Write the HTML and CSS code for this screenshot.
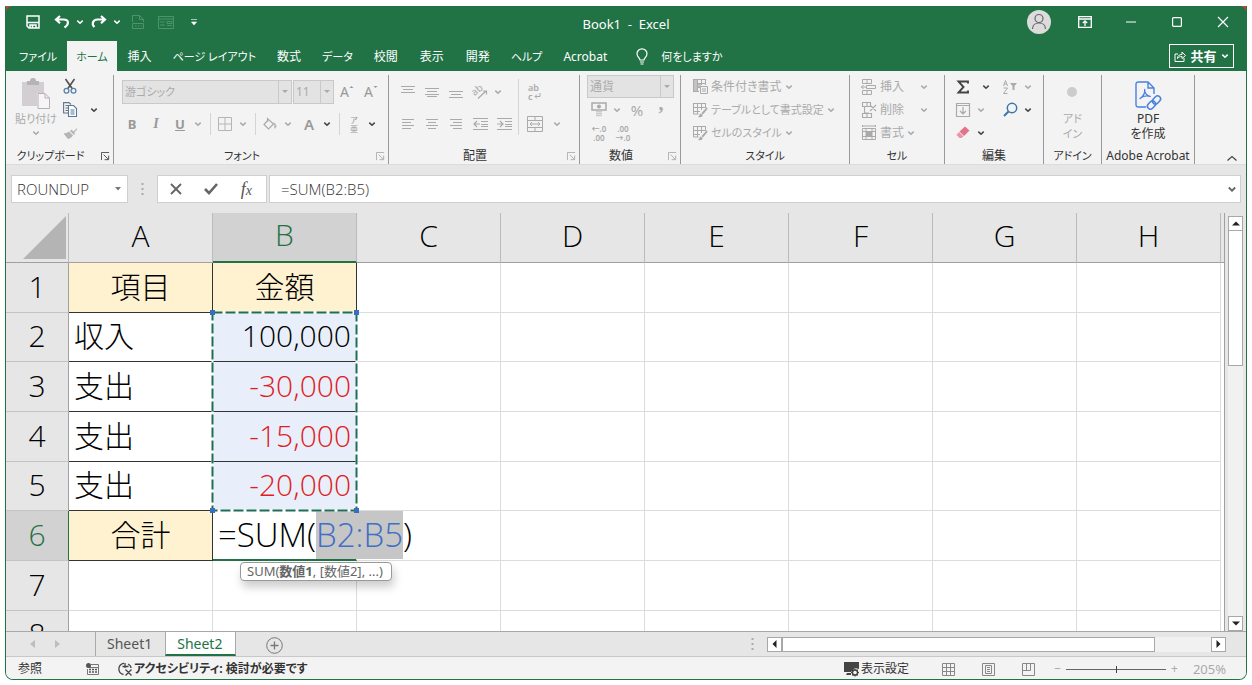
FILE: index.html
```html
<!DOCTYPE html>
<html lang="ja">
<head>
<meta charset="utf-8">
<title>Book1 - Excel</title>
<link rel="stylesheet" href="styles.css">
</head>
<body>
<svg class="defs" aria-hidden="true">
  <symbol id="chev" viewBox="0 0 8 8"><path d="M1.300 2.600 4 5.300 6.700 2.600" fill="none" stroke="currentColor" stroke-width="1.500"/></symbol>
  <symbol id="launch" viewBox="0 0 10 10"><path d="M.5 9V.5H9M3 3l5 5M8.500 4v4.500H4" fill="none" stroke="currentColor"/></symbol>
  <symbol id="tablebrush" viewBox="0 0 16 16"><path d="M1 1.500h13M1 5.500h13M1 9.500h7M1.500 1v11h5M5.500 1v11M9.500 1v7M13.500 1v4" fill="none" stroke="currentColor"/><path d="M15 5 9.500 11l1.500 1.500L15.500 7zM9 11.500c-2 .5-1 2.500-3 3.500 2.500.5 5 0 4.500-2z" fill="currentColor"/></symbol>
</svg>
<div class="window">
  <div class="top">
    <header class="head">
      <div class="titlebar">
        <div class="qat">
          <button class="b" aria-label="保存"><svg width="14" height="14" viewBox="0 0 14 14"><path d="M1 1h12v12H3L1 11z" fill="none" stroke="currentColor" stroke-width="1.500"/><path d="M1 7.500h12M4 13v-3h6v3M6.500 10.500V13" fill="none" stroke="currentColor" stroke-width="1.500"/></svg></button>
          <button class="b undo" aria-label="元に戻す"><svg width="16" height="14" viewBox="0 0 16 14"><path d="M6 1 2 4.500l4 3.800M2.500 4.500h7c6 0 5.500 5 1 8" fill="none" stroke="currentColor" stroke-width="2.200"/></svg></button>
          <button class="c" aria-label="元に戻す一覧"><svg width="8" height="8"><use href="#chev"/></svg></button>
          <button class="b redo" aria-label="やり直し"><svg width="16" height="14" viewBox="0 0 16 14"><path d="m10 1 4 3.500-4 3.800M13.500 4.500h-7c-5 0-6 5-3 7.500" fill="none" stroke="currentColor" stroke-width="2.200"/></svg></button>
          <button class="c" aria-label="やり直し一覧"><svg width="8" height="8"><use href="#chev"/></svg></button>
          <button class="b dim pdfq" aria-label="PDF"><svg width="12" height="14" viewBox="0 0 12 14"><path d="M.5 7V.5h7l4 4V7M7.500.5v4h4M.5 8.500h11v5H.5zM3 11h1.500M6 11h1.500M9 11h1" fill="none" stroke="currentColor"/></svg></button>
          <button class="b dim form" aria-label="フォーム"><svg width="16" height="13" viewBox="0 0 16 13"><path d="M.5.5h15v12H.5zM.5 3h15M2 6h5M2 9h5M9 5.500h5v2H9zM9 9.500h5" fill="none" stroke="currentColor"/></svg></button>
          <button class="b custom" aria-label="カスタマイズ"><svg width="6" height="8" viewBox="0 0 6 8"><path d="M0 1.500h6M.5 4h5L3 7z" fill="currentColor" stroke="currentColor" stroke-width=".6"/></svg></button>
        </div>
        <div class="title">Book1&nbsp; -&nbsp; Excel</div>
        <div class="wctl">
          <button class="avatar" aria-label="アカウント"><svg width="24" height="24" viewBox="0 0 24 24"><circle cx="12" cy="12" r="12" fill="#dcdcdc"/><circle cx="12" cy="8.500" r="4" fill="none" stroke="#666" stroke-width="1.200"/><path d="M5.500 19c0-8 13-8 13 0" fill="none" stroke="#666" stroke-width="1.200"/></svg></button>
          <button class="w" aria-label="リボンの表示"><svg width="14" height="12" viewBox="0 0 14 12"><path d="M.7.700h12.600v10.600H.7zM.7 3h12.600M7 10V5M4.800 7 7 4.800 9.200 7" fill="none" stroke="currentColor" stroke-width="1.300"/></svg></button>
          <button class="w" aria-label="最小化"><svg width="10" height="10" viewBox="0 0 10 10"><path d="M0 5h10" stroke="currentColor" stroke-width="1.200"/></svg></button>
          <button class="w" aria-label="最大化"><svg width="10" height="10" viewBox="0 0 10 10"><rect x=".6" y=".6" width="8.800" height="8.800" rx="1" fill="none" stroke="currentColor" stroke-width="1.200"/></svg></button>
          <button class="w" aria-label="閉じる"><svg width="10" height="10" viewBox="0 0 10 10"><path d="m0 0 10 10M10 0 0 10" stroke="currentColor" stroke-width="1.200"/></svg></button>
        </div>
      </div>
      <nav class="tabs">
        <button class="tab kana">ファイル</button>
        <button class="tab kana on">ホーム</button>
        <button class="tab">挿入</button>
        <button class="tab kana">ページ レイアウト</button>
        <button class="tab">数式</button>
        <button class="tab kana">データ</button>
        <button class="tab">校閲</button>
        <button class="tab">表示</button>
        <button class="tab">開発</button>
        <button class="tab kana">ヘルプ</button>
        <button class="tab">Acrobat</button>
        <button class="tab kana tell"><svg width="12" height="17" viewBox="0 0 12 17"><path d="M4 12c0-2-3-3-3-6.200a5 5 0 0 1 10 0C11 9 8 10 8 12zM4 14h4M4.500 16h3" fill="none" stroke="currentColor" stroke-width="1.200"/></svg>何をしますか</button>
        <button class="share"><svg width="12" height="12" viewBox="0 0 12 12"><path d="M4 4H1v7.500h9V8M3.500 8.500c0-3 2-4 4.500-4V2l3.500 3.500L8 8.500V6.500c-2 0-3.500.5-4.500 2z" fill="none" stroke="currentColor"/></svg><b>共有</b><svg width="8" height="8"><use href="#chev"/></svg></button>
      </nav>
    </header>
  </div>

  <div class="ribbon">
    <section class="group">
      <div class="body clip">
        <button class="paste"><svg width="28" height="30" viewBox="0 0 28 30"><path d="M0 3h22v11h-7v13H0z" fill="#d2ced2"/><path d="M5 6V2h3a3 3 0 0 1 6 0h3v4z" fill="#b4b4b4"/><path d="M16 14.500h7l4.500 4.500v10.500H16zM23 14.500V19h4.500" fill="#f6f4f6" stroke="#b5b0b5"/></svg><span>貼り付け</span><svg width="8" height="8"><use href="#chev"/></svg></button>
        <div class="rows">
          <div class="r"><button class="b" aria-label="切り取り"><svg width="14" height="15" viewBox="0 0 14 15"><path d="M2.500 0 9.500 10M11.500 0 4.500 10" stroke="#505050" stroke-width="1.600"/><circle cx="3.500" cy="11.800" r="2.400" fill="none" stroke="#5583ad" stroke-width="1.300"/><circle cx="10.500" cy="11.800" r="2.400" fill="none" stroke="#5583ad" stroke-width="1.300"/></svg></button></div>
          <div class="r"><button class="b" aria-label="コピー"><svg width="14" height="15" viewBox="0 0 14 15"><path d="M5 11H.6V.6H6L8 2.500M2.500 3.500H5M2.500 6H5M2.500 8.500H5" fill="none" stroke="#667486" stroke-width="1.100"/><path d="M5.500 3.500h5l3 3v8h-8zM7.500 8h4M7.500 10h4M7.500 12h4" fill="#fff" stroke="#55789c" stroke-width="1.100"/></svg></button><button class="c dark" aria-label="コピー一覧"><svg width="8" height="8"><use href="#chev"/></svg></button></div>
          <div class="r"><button class="b" aria-label="書式のコピー"><svg width="14" height="12" viewBox="0 0 14 12"><path d="M14 1 10.500 4.500l-2-2L7 4l4 4 1-1.200-.800-1L14 2.500zM6 4.500C4 6 2 6 .5 6.500L5 12c2-.5 4-2 5-3.500z" fill="#b5b5b5"/></svg></button></div>
        </div>
      </div>
      <footer class="more kana"><span>クリップボード</span><button class="l dark" aria-label="詳細"><svg width="9" height="9"><use href="#launch"/></svg></button></footer>
    </section>

    <section class="group">
      <div class="body two font">
        <div class="r">
          <label class="sel family kana"><select aria-label="フォント"><option>游ゴシック</option></select><i><svg width="6" height="4" viewBox="0 0 6 4"><path d="M0 0h6L3 3z" fill="#aaa"/></svg></i></label>
          <label class="sel size"><select aria-label="サイズ"><option>11</option></select><i><svg width="6" height="4" viewBox="0 0 6 4"><path d="M0 0h6L3 3z" fill="#aaa"/></svg></i></label>
          <button class="b grow" aria-label="拡大">A<svg width="5" height="14" viewBox="0 0 5 14"><path d="M.5 3 2.500 1l2 2z" fill="currentColor"/></svg></button>
          <button class="b grow" aria-label="縮小">A<svg width="5" height="14" viewBox="0 0 5 14"><path d="m.5 1 2 2 2-2z" fill="currentColor"/></svg></button>
        </div>
        <div class="r">
          <button class="b"><b>B</b></button><button class="b it">I</button><button class="b ul">U</button><button class="c" aria-label="下線"><svg width="8" height="8"><use href="#chev"/></svg></button><hr>
          <button class="b" aria-label="罫線"><svg width="14" height="14" viewBox="0 0 14 14"><path d="M.5.5h13v13H.5zM7 0v14M0 7h14" fill="none" stroke="#b9b3b9"/></svg></button><button class="c" aria-label="罫線一覧"><svg width="8" height="8"><use href="#chev"/></svg></button><hr>
          <button class="b" aria-label="塗りつぶし"><svg width="14" height="14" viewBox="0 0 14 14"><path d="M5.500 2.500 1 7.500l4.500 4.500L10.500 7 4.500 1.500V5" fill="none" stroke="#aaa" stroke-width="1.200"/><path d="M10 5c3 1 3.500 3 3.500 5l-1.500 2-1-2c.5-2 0-3-1-5z" fill="#bbb"/></svg></button><button class="c" aria-label="塗りつぶし一覧"><svg width="8" height="8"><use href="#chev"/></svg></button>
          <button class="b fc">A</button><button class="c dark" aria-label="文字色"><svg width="8" height="8"><use href="#chev"/></svg></button><hr>
          <button class="b ruby"><span>ア</span><span>亜</span></button><button class="c dark" aria-label="ふりがな"><svg width="8" height="8"><use href="#chev"/></svg></button>
        </div>
      </div>
      <footer class="more kana"><span>フォント</span><button class="l" aria-label="詳細"><svg width="9" height="9"><use href="#launch"/></svg></button></footer>
    </section>

    <section class="group">
      <div class="body align">
        <div class="two">
          <div class="r">
            <button class="b" aria-label="上揃え"><svg width="14" height="14" viewBox="0 0 14 14"><path d="M0 1.500h14M2 4.500h10M0 7.500h14" stroke="currentColor"/></svg></button>
            <button class="b" aria-label="中央揃え"><svg width="14" height="14" viewBox="0 0 14 14"><path d="M0 3.500h14M2 6.500h10M0 9.500h14M2 11.500h10" stroke="currentColor"/></svg></button>
            <button class="b" aria-label="下揃え"><svg width="14" height="14" viewBox="0 0 14 14"><path d="M0 6.500h14M2 9.500h10M0 12.500h14" stroke="currentColor"/></svg></button>
            <button class="b" aria-label="方向"><svg width="15" height="14" viewBox="0 0 15 14"><text x="0" y="9" font-size="10" transform="rotate(-40 4 8)" fill="currentColor">ab</text><path d="M5 13.500 13 6M10 6h3.500v3.500" fill="none" stroke="currentColor" stroke-width="1.200"/></svg></button><button class="c" aria-label="方向一覧"><svg width="8" height="8"><use href="#chev"/></svg></button>
          </div>
          <div class="r">
            <button class="b" aria-label="左揃え"><svg width="12" height="10" viewBox="0 0 12 10"><path d="M0 .5h12M0 3.500h9M0 6.500h12M0 9.500h9" stroke="currentColor"/></svg></button>
            <button class="b" aria-label="中央"><svg width="12" height="10" viewBox="0 0 12 10"><path d="M0 .5h12M2 3.500h8M0 6.500h12M2 9.500h8" stroke="currentColor"/></svg></button>
            <button class="b" aria-label="右揃え"><svg width="12" height="10" viewBox="0 0 12 10"><path d="M0 .5h12M3 3.500h9M0 6.500h12M3 9.500h9" stroke="currentColor"/></svg></button>
            <button class="b" aria-label="インデント減"><svg width="15" height="12" viewBox="0 0 15 12"><path d="M0 .5h15M8 3.500h7M8 6.500h7M8 8.500h7M0 11.500h15M1 6h6M4 3 1 6l3 3" fill="none" stroke="currentColor" stroke-width="1.200"/></svg></button>
            <button class="b" aria-label="インデント増"><svg width="15" height="12" viewBox="0 0 15 12"><path d="M0 .5h15M8 3.500h7M8 6.500h7M8 8.500h7M0 11.500h15M0 6h6M3 3l3 3-3 3" fill="none" stroke="currentColor" stroke-width="1.200"/></svg></button>
          </div>
        </div>
        <hr class="tall">
        <div class="two">
          <div class="r"><button class="b wrap" aria-label="折り返し"><span>ab</span><span>c<svg width="7" height="7" viewBox="0 0 7 7"><path d="M6 0v3.500H1M3 1.500l-2 2 2 2" fill="none" stroke="currentColor"/></svg></span></button></div>
          <div class="r"><button class="b" aria-label="結合"><svg width="16" height="16" viewBox="0 0 16 16"><path d="M.5.500h15v15H.5zM.5 4.500h15M.5 11.500h15M8 .5v4M8 11.500v4M3 8h10M5 6 3 8l2 2M11 6l2 2-2 2" fill="none" stroke="currentColor"/></svg></button><button class="c mc" aria-label="結合一覧"><svg width="8" height="8"><use href="#chev"/></svg></button></div>
        </div>
      </div>
      <footer class="more"><span>配置</span><button class="l" aria-label="詳細"><svg width="9" height="9"><use href="#launch"/></svg></button></footer>
    </section>

    <section class="group">
      <div class="body num">
        <div class="r"><label class="sel"><select aria-label="表示形式"><option>通貨</option></select><i><svg width="6" height="4" viewBox="0 0 6 4"><path d="M0 0h6L3 3z" fill="#aaa"/></svg></i></label></div>
        <div class="r"><button class="b" aria-label="通貨"><svg width="16" height="15" viewBox="0 0 16 15"><path d="M1 1h14v7H1z" fill="none" stroke="currentColor" stroke-width="1.500"/><circle cx="8" cy="4.500" r="2" fill="currentColor"/><path d="M5 9.500h6M5 11.500h6M5 13.500h6" stroke="#ccc" stroke-width="1.500"/></svg></button><button class="c" aria-label="通貨一覧"><svg width="8" height="8"><use href="#chev"/></svg></button><button class="b pct">%</button><button class="b comma">,</button></div>
        <div class="r"><button class="b dec"><span>←.0</span><span>.00</span></button><button class="b dec"><span>.00</span><span>→.0</span></button></div>
      </div>
      <footer class="more"><span>数値</span><button class="l" aria-label="詳細"><svg width="9" height="9"><use href="#launch"/></svg></button></footer>
    </section>

    <section class="group">
      <div class="body list">
        <button class="r"><svg width="16" height="16" viewBox="0 0 16 16"><path d="M1 .5h12M1 4.500h12M1 8.500h7M1 12.500h6M1.500 0v13M5.500 0v13M9.500 0v6M13.500 0v6" fill="none" stroke="currentColor"/><path d="M2 1h3v11H2zM6 5h3v3H6z" fill="#c5c1c5"/><path d="M8.500 7.500h7v7h-7zM10 10h4M10 12h4" fill="#f3f3f3" stroke="currentColor"/></svg><span>条件付き書式</span><svg width="8" height="8"><use href="#chev"/></svg></button>
        <button class="r kana"><svg width="16" height="16"><use href="#tablebrush"/></svg><span>テーブルとして書式設定</span><svg width="8" height="8"><use href="#chev"/></svg></button>
        <button class="r kana"><svg width="16" height="16"><use href="#tablebrush"/></svg><span>セルのスタイル</span><svg width="8" height="8"><use href="#chev"/></svg></button>
      </div>
      <footer class="kana"><span>スタイル</span></footer>
    </section>

    <section class="group">
      <div class="body list cellgrp">
        <button class="r spread"><svg width="16" height="16" viewBox="0 0 16 16"><path d="M1.500.5h9v4h-9zM6 .5v4M1.500 11.500h9v4h-9zM6 11.500v4M5.500 6.500h9v3h-9zM0 8h5M2.500 6 .5 8l2 2" fill="none" stroke="currentColor"/></svg><span>挿入</span><svg width="8" height="8"><use href="#chev"/></svg></button>
        <button class="r spread"><svg width="16" height="16" viewBox="0 0 16 16"><path d="M1.500.5h8v4h-8zM6 .5v4M1.500 11.500h9v4h-9zM6 11.500v4M3.500 5v6h4M9 3l6 6M15 3 9 9" fill="none" stroke="currentColor" stroke-width="1.100"/></svg><span>削除</span><svg width="8" height="8"><use href="#chev"/></svg></button>
        <button class="r"><svg width="16" height="16" viewBox="0 0 16 16"><path d="M1.500 3.500h13v11h-13zM5 3v12M11 3v12M1 6.500h14M1 11.500h14M1 1h14M1.500 0v2M14.500 0v2" fill="none" stroke="currentColor"/><path d="M5 6h6v5H5z" fill="currentColor"/></svg><span>書式</span><svg width="8" height="8"><use href="#chev"/></svg></button>
      </div>
      <footer class="kana"><span>セル</span></footer>
    </section>

    <section class="group">
      <div class="body edit">
        <div class="r"><button class="b dark" aria-label="合計"><svg width="14" height="14" viewBox="0 0 14 14"><path d="M12 3.500V1.500H2.500L7.500 7l-5 5.500H12v-2" fill="none" stroke="#444" stroke-width="1.900"/></svg></button><button class="c dark far" aria-label="合計一覧"><svg width="8" height="8"><use href="#chev"/></svg></button></div>
        <div class="r"><button class="b" aria-label="並べ替え"><svg width="15" height="14" viewBox="0 0 15 14"><path d="m.5 6 2-5.500 2 5.500M1.200 4h2.600M.5 8h4l-4 5.500h4" fill="none" stroke="currentColor"/><path d="M7 3h7l-2.500 3v4h-2V6z" fill="currentColor"/></svg></button><button class="c" aria-label="並べ替え一覧"><svg width="8" height="8"><use href="#chev"/></svg></button></div>
        <div class="r"><button class="b" aria-label="フィル"><svg width="14" height="14" viewBox="0 0 14 14"><path d="M.5.5h13v13H.5zM.5 2.500h13M7 4v7M4 8l3 3 3-3" fill="none" stroke="currentColor" stroke-width="1.200"/></svg></button><button class="c" aria-label="フィル一覧"><svg width="8" height="8"><use href="#chev"/></svg></button></div>
        <div class="r"><button class="b" aria-label="検索"><svg width="15" height="15" viewBox="0 0 15 15"><circle cx="9" cy="6" r="4.700" fill="none" stroke="#3a76a8" stroke-width="1.500"/><path d="M5.500 9.500 1 14" stroke="#3a76a8" stroke-width="2"/></svg></button><button class="c dark" aria-label="検索一覧"><svg width="8" height="8"><use href="#chev"/></svg></button></div>
        <div class="r"><button class="b" aria-label="クリア"><svg width="14" height="13" viewBox="0 0 14 13"><path d="M9 .5 13.500 4.500 8 10 3.500 5.500z" fill="#e0748a"/><path d="m3 6 4.500 4.500L5.500 12h-2L.5 9z" fill="#eb94a5"/></svg></button><button class="c dark" aria-label="クリア一覧"><svg width="8" height="8"><use href="#chev"/></svg></button></div>
      </div>
      <footer><span>編集</span></footer>
    </section>

    <section class="group">
      <button class="body big kana"><svg width="28" height="32" viewBox="0 0 28 32"><circle cx="13" cy="13" r="5" fill="#ccc"/></svg><span>アド</span><span>イン</span></button>
      <footer class="kana"><span>アドイン</span></footer>
    </section>

    <section class="group">
      <button class="body big pdf"><svg width="28" height="32" viewBox="0 0 28 32"><path d="M12 28H4.500Q2 28 2 25.500V5.500Q2 3 4.500 3H14l6 6v6M14 3v6h6" fill="none" stroke="#4a80e0" stroke-width="1.400"/><path d="M6 19.500c2.500-1.500 5-5 4.700-9M10.700 10.500c-.5 3 2 6.500 5.500 7M6 19.500c2.500-2 7-3 10.200-2" fill="none" stroke="#4a80e0" stroke-width="1.300" stroke-linecap="round"/><g fill="none" stroke="#4a80e0" stroke-width="1.500"><rect x="18" y="18" width="9" height="6" rx="3" transform="rotate(-45 22.500 21)"/><rect x="13" y="23" width="9" height="6" rx="3" transform="rotate(-45 17.500 26)"/></g></svg><span>PDF</span><span>を作成</span></button>
      <footer><span>Adobe Acrobat</span></footer>
    </section>

    <div class="fold"><button class="l dark" aria-label="リボンを折りたたむ"><svg width="10" height="6" viewBox="0 0 10 6"><path d="m.5 5.500 4.500-4 4.500 4" fill="none" stroke="currentColor" stroke-width="1.200"/></svg></button></div>
  </div>

  <div class="fbar">
    <label class="box name"><input aria-label="名前ボックス" value="ROUNDUP"><svg width="6" height="4" viewBox="0 0 6 4"><path d="M0 0h6L3 3.500z" fill="#777"/></svg></label>
    <span class="grip"><svg width="3" height="12" viewBox="0 0 3 12"><path d="M1.500 0v12" stroke="#aaa" stroke-width="2" stroke-dasharray="2 3"/></svg></span>
    <div class="box fx">
      <button aria-label="キャンセル"><svg width="12" height="12" viewBox="0 0 12 12"><path d="m1 1 10 10M11 1 1 11" stroke="#666" stroke-width="1.900"/></svg></button>
      <button aria-label="入力"><svg width="14" height="12" viewBox="0 0 14 12"><path d="m1 6 4 4 8-9" fill="none" stroke="#666" stroke-width="2.600"/></svg></button>
      <button class="fn"><i>f<small>x</small></i></button>
    </div>
    <label class="box formula"><input aria-label="数式バー" value="=SUM(B2:B5)"><svg width="8" height="7" viewBox="0 0 8 7"><path d="m.8 1.500 3.200 3.200L7.200 1.500" fill="none" stroke="#666" stroke-width="1.800"/></svg></label>
  </div>

  <div class="work">
    <div class="sheet">
      <table>
        <colgroup><col class="rh"><col span="8" class="dc"></colgroup>
        <thead><tr><th class="corner"><svg width="43" height="43" viewBox="0 0 43 43"><path d="M43 0v43H0z" fill="#b4b4b4"/></svg></th><th>A</th><th class="act">B</th><th>C</th><th>D</th><th>E</th><th>F</th><th>G</th><th>H</th></tr></thead>
        <tbody>
          <tr><th>1</th><td class="k hd">項目</td><td class="k hd">金額</td><td></td><td></td><td></td><td></td><td></td><td></td></tr>
          <tr><th>2</th><td class="k">収入</td><td class="k n">100,000</td><td></td><td></td><td></td><td></td><td></td><td></td></tr>
          <tr><th>3</th><td class="k">支出</td><td class="k n neg">-30,000</td><td></td><td></td><td></td><td></td><td></td><td></td></tr>
          <tr><th>4</th><td class="k">支出</td><td class="k n neg">-15,000</td><td></td><td></td><td></td><td></td><td></td><td></td></tr>
          <tr><th>5</th><td class="k">支出</td><td class="k n neg">-20,000</td><td></td><td></td><td></td><td></td><td></td><td></td></tr>
          <tr><th class="act">6</th><td class="k hd">合計</td><td class="editing"><div class="editor" contenteditable="true" spellcheck="false">=SUM(<span class="ref">B2:B5</span>)</div><div class="hint">SUM(<b>数値1</b>, [数値2], ...)</div></td><td></td><td></td><td></td><td></td><td></td><td></td></tr>
          <tr><th>7</th><td></td><td></td><td></td><td></td><td></td><td></td><td></td><td></td></tr>
          <tr><th>8</th><td></td><td></td><td></td><td></td><td></td><td></td><td></td><td></td></tr>
        </tbody>
      </table>
      <svg class="ants" width="149" height="203" viewBox="0 0 149 203"><path d="M2.500 2.500h144v198H2.500z" fill="none" stroke="#fff" stroke-width="2"/><path d="M2.500 2.500h144v198H2.500z" fill="none" stroke="#1d6f55" stroke-width="2" stroke-dasharray="10 3"/><path d="M0 0h5v5H0zM144 0h5v5h-5zM0 198h5v5H0zM144 198h5v5h-5z" fill="#3a6cc0"/></svg>
    </div>
    <div class="vs">
      <button aria-label="上へ"><svg width="8" height="5" viewBox="0 0 8 5"><path d="M0 4.500h8L4 .5z" fill="#222"/></svg></button>
      <div class="vtrack"><div class="vthumb"></div></div>
      <button aria-label="下へ"><svg width="8" height="5" viewBox="0 0 8 5"><path d="M0 .5h8L4 4.500z" fill="#222"/></svg></button>
    </div>
  </div>

  <div class="sheets">
    <div class="nav"><button aria-label="前"><svg width="5" height="8" viewBox="0 0 5 8"><path d="M5 0v8L0 4z" fill="#bdbdbd"/></svg></button><button aria-label="次"><svg width="5" height="8" viewBox="0 0 5 8"><path d="M0 0v8l5-4z" fill="#bdbdbd"/></svg></button></div>
    <button class="st">Sheet1</button><button class="st on">Sheet2</button>
    <button class="add" aria-label="新しいシート"><svg width="17" height="17" viewBox="0 0 17 17"><circle cx="8.500" cy="8.500" r="7.800" fill="none" stroke="#777"/><path d="M8.500 4.500v8M4.500 8.500h8" stroke="#777" stroke-width="1.300"/></svg></button>
    <div class="hs">
      <span class="grip"><svg width="3" height="12" viewBox="0 0 3 12"><path d="M1.500 0v12" stroke="#aaa" stroke-width="2" stroke-dasharray="2 3"/></svg></span>
      <button aria-label="左へ"><svg width="5" height="8" viewBox="0 0 5 8"><path d="M4.500 0v8L.5 4z" fill="#222"/></svg></button>
      <div class="htrack"><div class="hthumb"></div></div>
      <button aria-label="右へ"><svg width="5" height="8" viewBox="0 0 5 8"><path d="M.5 0v8l4-4z" fill="#222"/></svg></button>
    </div>
  </div>

  <footer class="status">
    <span class="mode">参照</span>
    <button class="macro" aria-label="マクロの記録"><svg width="13" height="12" viewBox="0 0 13 12"><path d="M5 1.500h7.500v10h-11V6M1.500 4.500h11" fill="none" stroke="#777"/><path d="M3 6.500h8M3 9h8" stroke="#555" stroke-width="1.500" stroke-dasharray="2 1"/><circle cx="2.500" cy="2.500" r="2.500" fill="#555"/></svg></button>
    <button class="acc"><svg width="15" height="15" viewBox="0 0 15 15"><path d="M6 1.200C-1 3-.5 11 5.500 12.500M7 1v5M4.500 4.500h6M10 2c2 1 3 3 3 4M7.500 7.500l6 6M13.500 7.500l-6 6" fill="none" stroke="#444" stroke-width="1.300"/></svg><b>アクセシビリティ: 検討が必要です</b></button>
    <button class="disp"><svg width="16" height="15" viewBox="0 0 16 15"><path d="M0 0h15v7l-4-1-4 4H0zM3 11h4v2H2z" fill="#444"/><circle cx="11" cy="10.500" r="2.600" fill="none" stroke="#444" stroke-width="1.500"/><path d="M11 6.500v2M11 12.500v2M7 10.500h2M13 10.500h2M8.200 7.700l1.300 1.300M12.500 12l1.300 1.300M13.800 7.700 12.500 9M9.500 12l-1.300 1.300" stroke="#444" stroke-width="1.200"/></svg>表示設定</button>
    <button class="view" aria-label="標準"><svg width="13" height="13" viewBox="0 0 13 13"><path d="M.5.5h12v12H.5zM4.500 0v13M8.500 0v13M0 4.500h13M0 8.500h13" fill="none" stroke="#888"/></svg></button>
    <button class="view" aria-label="ページレイアウト"><svg width="13" height="13" viewBox="0 0 13 13"><path d="M.5.5h12v12H.5zM3.500 2.500h6v8h-6zM5 4.500h3M5 6.500h3M5 8.500h3" fill="none" stroke="#888"/></svg></button>
    <button class="view" aria-label="改ページ"><svg width="13" height="13" viewBox="0 0 13 13"><path d="M.5.5h12v12H.5zM4.500.5v7M8.500.5v7M.5 7.500h8" fill="none" stroke="#888"/></svg></button>
    <div class="zoom"><button>−</button><input type="range" min="0" max="100" value="50" aria-label="ズーム"><button>+</button><span>205%</span></div>
  </footer>
</div>
</body>
</html>
```
FILE: styles.css
```css
* { box-sizing: border-box; }
body {
  margin: 0;
  height: 100vh;
  padding: 6px 5px 5px;
  background: #fff;
  font: 12px/16px "Noto Sans", "Noto Sans CJK JP", sans-serif;
  font-feature-settings: "palt";
  color: #333;
}
button, input, select {
  font: inherit;
  font-feature-settings: inherit;
  color: inherit;
  background: none;
  border: 0;
  padding: 0;
  margin: 0;
  border-radius: 0;
  outline: 0;
}
button { display: flex; align-items: center; justify-content: center; white-space: nowrap; }
svg { display: block; flex: none; overflow: visible; }
.defs { position: absolute; width: 0; height: 0; }
.kana { font-size: 11px; }
.window {
  height: 100%;
  display: flex;
  flex-direction: column;
  border: 1px solid #217346;
  border-top: 0;
  border-radius: 0 0 8px 8px;
  background: #e6e6e6;
  overflow: hidden;
}

/* Title bar and tabs */
.top { background: #c8452f; }
.head { background: #217346; color: #fff; border-radius: 6px 6px 0 0; }
.titlebar { display: grid; grid-template-columns: 1fr auto 1fr; height: 35px; }
.qat { display: flex; align-items: center; padding-left: 15px; }
.undo { margin-left: 5px; }
.redo { margin-left: 1px; }
.pdfq { margin-left: 3px; }
.form, .custom { margin-left: 4px; }
.qat, .wctl { padding-bottom: 3px; }
.title { align-self: center; font-size: 13px; }
.wctl { display: flex; justify-content: flex-end; align-items: center; }
.avatar { margin-right: 11px; }
.w { width: 46px; height: 28px; }
.tabs { display: flex; height: 30px; padding-left: 3px; }
.tab { padding: 1px 11px 0; }
.tab.kana { padding: 1px 10px 0; }
.tab.on { background: #f3f3f3; color: #217346; padding: 1px 9px 0; }
.tab.tell { gap: 13px; margin-left: 8px; }
.share {
  margin: 3px 12px 3px auto;
  width: 65px;
  gap: 4px;
  border: 1px solid #fff;
  font-size: 13px;
}

/* Ribbon */
.ribbon {
  display: grid;
  grid-template-columns: 108px 275px 191px 101px 169px 95px 99px 58px 93px 1fr;
  background: #f3f3f3;
  height: 93px;
  padding-top: 4px;
  color: #aaa;
}
.group {
  display: flex;
  flex-direction: column;
  justify-content: space-between;
  border-right: 1px solid #999;
  min-width: 0;
}
.group footer {
  position: relative;
  height: 17px;
  color: #333;
  display: flex;
  justify-content: center;
  align-items: flex-end;
}
.group footer.more { padding-right: 18px; }
.group footer span { white-space: nowrap; }
.l { color: #aaa; }
.group footer .l { position: absolute; right: 3px; top: 5px; }
.r { display: flex; align-items: center; height: 23px; }
.b { width: 24px; height: 23px; color: inherit; flex: none; }
.c { width: 12px; height: 23px; flex: none; }
.dark, .group footer .dark { color: #444; }
.dim { color: #4b946c; }
.body.clip { display: flex; padding-left: 8px; }
.clip .r .c { margin-left: 6px; }
.paste { flex-direction: column; width: 44px; padding-top: 4px; justify-content: flex-start; }
.paste span { font-size: 11px; line-height: 20px; }
.two { display: flex; flex-direction: column; gap: 9px; padding-top: 5px; }
.font { padding-left: 6px; }
.sel { display: flex; border: 1px solid #c9c9c9; background: #e3e3e3; height: 24px; color: #aaa; }
.sel select { appearance: none; flex: 1; min-width: 0; padding-left: 2px; }
.sel i { width: 13px; border-left: 1px solid #c9c9c9; display: grid; place-items: center; }
.family { width: 170px; margin: 0 1px 0 2px; }
.size { width: 41px; margin-right: 1px; }
.grow { font-size: 14px; }
.font .b { color: #999; }
.font .b b { font-size: 13px; }
.it { font: italic bold 14px "Liberation Serif", serif; }
.ul { font-size: 13px; font-weight: bold; text-decoration: underline; }
.fc { font-size: 15px; font-weight: 600; margin-left: 3px; }
hr { width: 1px; height: 22px; border: 0; background: #d4d4d4; margin: 0 2px 0 6px; flex: none; }
.ruby { flex-direction: column; font-size: 8px; line-height: 9px; }
.align { display: flex; padding-left: 7px; }
.align hr.tall { height: 56px; margin: 4px 4px 0 2px; }
.wrap { flex-direction: column; align-items: flex-start; padding-left: 5px; font-size: 9px; line-height: 9px; font-weight: 600; }
.wrap span { display: flex; align-items: center; gap: 1px; height: 9px; }
.mc { margin-left: 4px; }
.num { padding-left: 7px; }
.num .sel { width: 87px; height: 23px; }
.num .pct { font-size: 15px; margin-left: 2px; }
.num .comma { font: bold 20px/10px "Liberation Serif", serif; align-items: flex-start; }
.dec { flex-direction: column; font-size: 8px; line-height: 9px; font-weight: 600; }
.list { padding-left: 11px; }
.list .r { gap: 3px; }
.list .spread svg:last-child { margin-left: 13px; }
.edit { display: grid; grid-template-columns: 47px auto; padding-left: 6px; }
.edit .far { margin-left: 5px; }
.big { flex-direction: column; width: 100%; padding-top: 4px; line-height: 15px; }
.big span { font-size: 12px; }
.big.kana span { font-size: 11px; }
.pdf { color: #333; }
.fold { display: flex; justify-content: flex-end; align-items: flex-end; padding: 0 9px 3px 0; }

/* Formula bar */
.fbar { display: flex; height: 49px; align-items: center; padding: 0 5px; border-top: 1px solid #dcdcdc; }
.box {
  display: flex;
  align-items: center;
  height: 28px;
  background: #fff;
  border: 1px solid #cfcfcf;
  font: 300 15px/20px "Open Sans", "Noto Sans CJK JP", sans-serif;
  font-feature-settings: normal;
}
.name { width: 117px; padding: 0 6px 0 5px; }
.box input { flex: 1; min-width: 0; }
.grip { width: 29px; display: grid; place-items: center; flex: none; }
.fx { width: 110px; margin-right: 2px; padding-right: 2px; }
.fx button { flex: 1; }
.fx .fn { font: 18px "Liberation Serif", serif; color: #555; }
.fn small { font-size: 14px; }
.formula { flex: 1; padding: 0 4px 0 11px; }

/* Grid */
.work { flex: 1; min-height: 0; display: flex; border-bottom: 1px solid #a8a8a8; }
.sheet { position: relative; flex: 1; min-width: 0; overflow: hidden; border-right: 1px solid #a0a0a0; background: linear-gradient(#e6e6e6 49px, #a0a0a0 49px, #a0a0a0 50px, #fff 50px); }
table {
  table-layout: fixed;
  width: 1215px;
  border-collapse: separate;
  border-spacing: 0;
  font: 300 30px/40px "Open Sans", "Noto Sans CJK JP", sans-serif;
  font-feature-settings: normal;
  color: #000;
}
.rh { width: 63px; }
.dc { width: 144px; }
th { font-weight: 300; padding: 0 0 2px; text-align: center; background: #e6e6e6; border-right: 1px solid #a0a0a0; border-bottom: 1px solid #c4c4c4; }
thead th { height: 50px; padding-bottom: 4px; border-right-color: #bbb; border-bottom-color: #a0a0a0; }
tbody tr { height: 50px; }
tbody tr:nth-child(3n + 2) { height: 49px; }
thead .corner { padding-bottom: 0; }
.corner svg { margin-left: 17px; }
.act { background: #d2d2d2; color: #217346; }
thead .act { border-bottom: 2px solid #217346; }
tbody .act { border-right-color: #217346; }
td { padding: 0 5px 2px; border-right: 1px solid #dcdcdc; border-bottom: 1px solid #dcdcdc; }
.k { border-color: #333; }
.hd { background: #fff2d0; text-align: center; }
.n { background: #e8effa; text-align: right; }
.neg { color: #e01c24; }
.editing { position: relative; border-bottom: 2px solid #217346; border-right-color: #fff; }
.editor { position: absolute; left: 0; top: 0; line-height: 48px; font-size: 33px; padding-left: 5px; white-space: nowrap; }
.ref { display: inline-block; background: #c6c6c6; color: #3f6fc6; }
.hint {
  position: absolute;
  left: 27px;
  top: 51px;
  padding: 0 8px 0 6px;
  height: 19px;
  border: 1px solid #999;
  border-radius: 4px;
  background: #fff;
  box-shadow: 2px 6px 10px #0003;
  font: 13px/17px "Noto Sans", "Noto Sans CJK JP", sans-serif;
  color: #666;
  white-space: nowrap;
  z-index: 1;
}
.ants { position: absolute; left: 204px; top: 97px; }

/* Scroll bars */
.vs { width: 21px; padding: 3px 3px 0; display: flex; flex-direction: column; }
.vs button, .hs button { width: 15px; height: 15px; background: #fff; border: 1px solid #a8a8a8; flex: none; }
.vtrack { flex: 1; background: #f1f1f1; }
.vthumb { height: 35%; background: #fff; border: 1px solid #a8a8a8; border-top: 0; }
.hs { display: flex; align-items: center; margin-left: auto; width: 41%; padding-right: 20px; }
.htrack { flex: 1; height: 15px; background: #f1f1f1; }
.hthumb { width: 87%; height: 15px; background: #fff; border: 1px solid #a8a8a8; }

/* Sheet tabs */
.sheets { display: flex; height: 25px; border-bottom: 1px solid #c8c8c8; font-size: 14px; color: #555; }
.nav { display: flex; align-items: center; width: 89px; padding-left: 24px; gap: 20px; }
.st { padding: 0 13px 0 11px; border-left: 1px solid #aaa; }
.st.on { background: #fff; color: #217346; border-bottom: 2px solid #217346; border-right: 1px solid #aaa; padding-top: 1px; }
.add { margin-left: 30px; padding-top: 2px; }

/* Status bar */
.status { display: flex; align-items: center; height: 22px; background: #f3f3f3; padding: 2px 20px 0 12px; }
.macro { margin-left: 44px; }
.acc { margin-left: 19px; gap: 1px; }
.disp { margin-left: auto; gap: 1px; margin-right: 33px; }
.view { margin-right: 27px; }
.view + .zoom { margin-left: -8px; }
.zoom { display: flex; align-items: center; gap: 5px; color: #aaa; }
.zoom span { margin-left: 10px; font-size: 13px; }
.zoom input {
  appearance: none;
  width: 100px;
  height: 7px;
  background: linear-gradient(#666, #666) center / 100% 1px no-repeat;
}
.zoom input::-webkit-slider-thumb { appearance: none; width: 1px; height: 7px; background: #444; }
```
